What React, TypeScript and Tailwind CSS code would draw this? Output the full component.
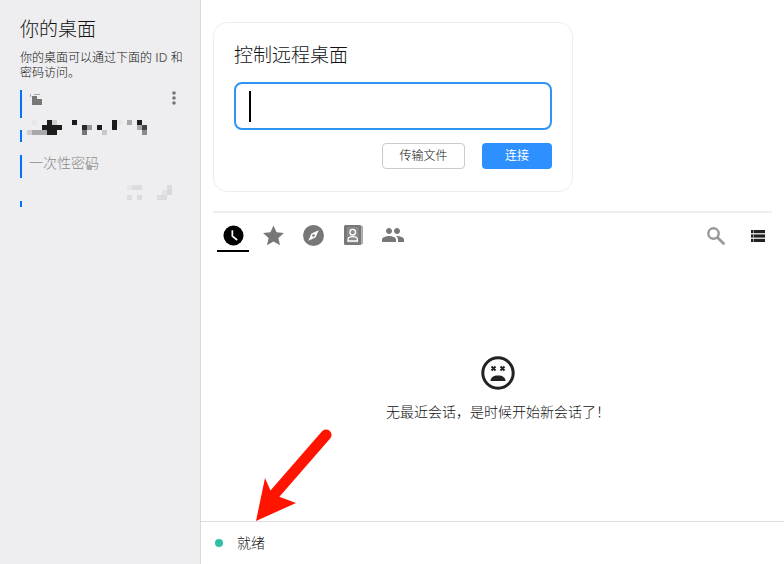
import React from "react";

const font = { fontFamily: '"Liberation Sans","Noto Sans CJK SC",sans-serif' };

type Cell = [number, number, number, number, string];

const idCells: Cell[] = [
  [32, 120, 5, 5, "#e6e6e8"],
  [47, 120, 5, 5, "#1c1c1c"],
  [52, 120, 5, 5, "#d0d0d2"],
  [72, 120, 5, 5, "#1c1c1c"],
  [112, 120, 5, 5, "#1c1c1c"],
  [117, 120, 5, 5, "#e6e6e8"],
  [127, 120, 5, 5, "#aaaaac"],
  [137, 120, 5, 5, "#1c1c1c"],
  [42, 125, 15, 5, "#1c1c1c"],
  [57, 125, 5, 5, "#1c1c1c"],
  [82, 125, 5, 5, "#2a2a2a"],
  [87, 125, 5, 5, "#999999"],
  [97, 125, 5, 5, "#1c1c1c"],
  [112, 125, 5, 5, "#1c1c1c"],
  [137, 125, 5, 5, "#aaaaac"],
  [142, 125, 5, 5, "#444444"],
  [27, 130, 5, 5, "#cfcfd1"],
  [32, 130, 15, 5, "#a8a8aa"],
  [47, 130, 10, 5, "#1c1c1c"],
  [82, 130, 5, 5, "#777777"],
  [102, 130, 5, 5, "#c8c8ca"],
  [142, 130, 5, 5, "#8a8a8a"],
];

const pwCells: Cell[] = [
  [127, 185, 5, 5, "#e6e6e8"],
  [132, 185, 10, 5, "#dcdcde"],
  [167, 185, 5, 5, "#dcdcde"],
  [162, 190, 5, 5, "#e2e2e4"],
  [167, 190, 5, 5, "#d8d8da"],
  [127, 195, 5, 5, "#dcdcde"],
  [137, 195, 5, 5, "#dcdcde"],
  [157, 195, 10, 5, "#dcdcde"],
];

const Tab = ({ children }: { children: React.ReactNode }) => (
  <div className="ml-[8px] flex h-[30px] w-[32px] items-center justify-center">{children}</div>
);

export default function App() {
  return (
    <div className="relative flex h-[564px] w-[784px] overflow-hidden bg-white font-light text-[#111]" style={font}>
      <aside className="flex w-[201px] shrink-0 flex-col border-r border-[#d9d9db] bg-[#eeeef0] pt-[17px]">
        <h2 className="pl-[20px] text-[19px] leading-[26px] font-light">你的桌面</h2>
        <p className="mt-[8px] pl-[20px] pr-[12px] text-[12px] leading-[15px]">
          你的桌面可以通过下面的 <span className="text-[#666]">ID</span> 和密码访问。
        </p>
        <div className="mt-[9px] flex flex-col pl-[20px]">
          <svg width="160" height="53" viewBox="20 90 160 53" className="block">
            <rect x="20" y="90" width="2" height="28" fill="#0071ff" />
            <rect x="20" y="130" width="2" height="12" fill="#0071ff" />
            <rect x="32" y="99" width="10" height="6" fill="#777" />
            <rect x="32" y="96" width="5" height="3" fill="#777" />
            <path d="M30 94h1v3h-1zM34 94h6v1h-6z" fill="#aaa" />
            {idCells.map(([x, y, w, h, c], i) => (
              <rect key={i} x={x} y={y} width={w} height={h} fill={c} />
            ))}
            <circle cx="174" cy="93" r="1.8" fill="#777" />
            <circle cx="174" cy="98" r="1.8" fill="#777" />
            <circle cx="174" cy="103" r="1.8" fill="#777" />
          </svg>
          <div className="relative mt-[12px] h-[23px] border-l-2 border-[#0071ff] pl-[7px] text-[14px] leading-[17px] text-[#8a8a8a]">
            一次性密码
            <span className="absolute left-[65px] top-[10px] h-[5px] w-[5px] bg-[#aaaaac]" />
          </div>
          <svg width="160" height="29" viewBox="20 178 160 29" className="block">
            <rect x="20" y="201" width="2" height="6" fill="#0071ff" />
            {pwCells.map(([x, y, w, h, c], i) => (
              <rect key={i} x={x} y={y} width={w} height={h} fill={c} />
            ))}
          </svg>
        </div>
      </aside>
      <main className="flex min-w-0 flex-1 flex-col">
        <div className="flex-1 px-[12px] pt-[22px]">
          <section className="flex h-[170px] w-[360px] flex-col rounded-[14px] border border-[#ededed] bg-white px-[20px] pt-[19px]">
            <h1 className="text-[19px] leading-[28px] font-light">控制远程桌面</h1>
            <div className="mt-[12px] flex h-[48px] items-center rounded-[8px] border-2 border-[#2e95f5] pl-[13px]">
              <span className="h-[31px] w-[2px] bg-black" />
            </div>
            <div className="mt-[13px] flex justify-end gap-[17px]">
              <button className="h-[26px] w-[83px] rounded-[4px] border border-[#cbcbcb] bg-white text-[12px]">传输文件</button>
              <button className="h-[26px] w-[70px] rounded-[4px] bg-[#2e8fff] text-[12px] font-normal text-white">连接</button>
            </div>
          </section>
          <div className="mt-[19px] h-[2px] bg-[#efefef]" />
          <nav className="mt-[7px] flex items-start pl-[4px]">
            <div className="flex w-[32px] flex-col items-center">
              <div className="flex h-[30px] items-center">
                <svg width="21" height="21" viewBox="0 0 22 22">
                  <circle cx="11" cy="11" r="10.500" fill="#000" />
                  <path d="M9.800 5.500v6.200l5 4" stroke="#fff" strokeWidth="1.800" fill="none" />
                </svg>
              </div>
              <div className="h-[2px] w-[32px] bg-black" />
            </div>
            <Tab>
              <svg width="23" height="23" viewBox="0 0 24 24" fill="#777">
                <path d="M12 1.600l3.200 7.100 7.700.8-5.800 5.100 1.700 7.600L12 18.300l-6.800 3.900 1.700-7.600-5.800-5.100 7.700-.8z" />
              </svg>
            </Tab>
            <Tab>
              <svg width="21" height="21" viewBox="0 0 22 22">
                <circle cx="11" cy="11" r="11" fill="#777" />
                <path d="M16.500 5.500l-3.400 7.600-7.600 3.400 3.400-7.600z" fill="#fff" />
                <circle cx="11" cy="11" r="1.300" fill="#777" />
              </svg>
            </Tab>
            <Tab>
              <svg width="19" height="20" viewBox="0 0 19 20">
                <rect x="0" y="0" width="17.500" height="20" rx="1.500" fill="#777" />
                <rect x="17.500" y="1" width="1.500" height="18" fill="#aaa" />
                <rect x="3" y="2" width="11.500" height="16" fill="#8a8a8a" />
                <circle cx="8.700" cy="7.200" r="2.800" fill="none" stroke="#fff" strokeWidth="1.300" />
                <path d="M4 16v-1.300c0-2 2.300-3 4.700-3s4.700 1 4.700 3V16z" fill="none" stroke="#fff" strokeWidth="1.300" />
              </svg>
            </Tab>
            <Tab>
              <svg width="24" height="24" viewBox="0 0 24 24" fill="#777">
                <path d="M16 11c1.660 0 2.990-1.340 2.990-3S17.660 5 16 5c-1.660 0-3 1.340-3 3s1.340 3 3 3zm-8 0c1.660 0 2.990-1.340 2.990-3S9.660 5 8 5C6.340 5 5 6.340 5 8s1.340 3 3 3zm0 2c-2.330 0-7 1.170-7 3.500V19h14v-2.500c0-2.330-4.670-3.500-7-3.500zm8 0c-.29 0-.62.020-.97.050 1.160.84 1.970 1.970 1.970 3.450V19h6v-2.500c0-2.330-4.670-3.500-7-3.500z" />
              </svg>
            </Tab>
            <div className="ml-auto flex h-[30px] items-center gap-[26px] pr-[7px] pt-[2px]">
              <svg width="18" height="18" viewBox="0 0 18 18" fill="none" stroke="#999">
                <circle cx="6.500" cy="6.500" r="5.200" strokeWidth="2.400" />
                <path d="M10.500 10.500l6 6" strokeWidth="2.800" strokeLinecap="round" />
              </svg>
              <svg width="14" height="12" viewBox="0 0 14 12" fill="#222">
                <rect x="0" y="0" width="2.500" height="3.200" />
                <rect x="3" y="0" width="11" height="3.200" />
                <rect x="0" y="4.400" width="2.500" height="3.200" />
                <rect x="3" y="4.400" width="11" height="3.200" />
                <rect x="0" y="8.800" width="2.500" height="3.200" />
                <rect x="3" y="8.800" width="11" height="3.200" />
              </svg>
            </div>
          </nav>
          <div className="mt-[103px] flex flex-col items-center pl-[11px]">
            <svg width="36" height="36" viewBox="0 0 36 36">
              <circle cx="18" cy="18" r="15.200" fill="none" stroke="#222" strokeWidth="3" />
              <path d="M11.500 11.500l4 4M15.500 11.500l-4 4M20.500 11.500l4 4M24.500 11.500l-4 4" stroke="#222" strokeWidth="2" />
              <path d="M10.500 26c0-3.500 3-5.500 7.500-5.500s7.500 2 7.500 5.500z" fill="#222" />
            </svg>
            <p className="mt-[12px] text-[14px] leading-[18px]">无最近会话，是时候开始新会话了！</p>
          </div>
        </div>
        <footer className="flex h-[43px] items-center border-t border-[#dddddd] pl-[14px] text-[14px]">
          <span className="h-[8px] w-[8px] rounded-full bg-[#32bfa8]" />
          <span className="ml-[14px]">就绪</span>
        </footer>
      </main>
      <svg className="pointer-events-none absolute left-[250px] top-[425px]" width="90" height="100" viewBox="250 425 90 100">
        <path d="M326 435L272 497" stroke="#ff1400" strokeWidth="11" strokeLinecap="round" fill="none" />
        <path d="M265 478L272 494 296 503 256 521z" fill="#ff1400" />
      </svg>
    </div>
  );
}
